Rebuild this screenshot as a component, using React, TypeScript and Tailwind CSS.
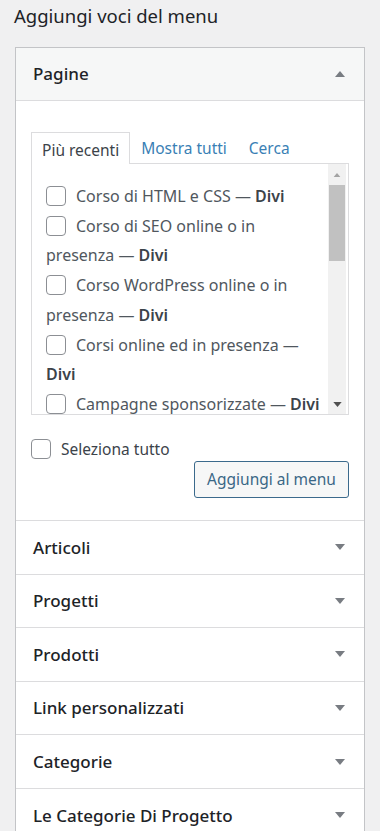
import React from 'react';

const sections = [
  'Articoli',
  'Progetti',
  'Prodotti',
  'Link personalizzati',
  'Categorie',
  'Le Categorie Di Progetto',
];

const pages: string[][] = [
  ['Corso di HTML e CSS'],
  ['Corso di SEO online o in', 'presenza'],
  ['Corso WordPress online o in', 'presenza'],
  ['Corsi online ed in presenza', ''],
  ['Campagne sponsorizzate'],
];

const Caret: React.FC<{ up?: boolean; className?: string }> = ({ up, className }) => (
  <svg width="10" height="6" viewBox="0 0 10 6" className={className}>
    {up ? <path d="M0 6 L5 0 L10 6 Z" fill="currentColor" /> : <path d="M0 0 L10 0 L5 6 Z" fill="currentColor" />}
  </svg>
);

const Checkbox: React.FC<{ className?: string }> = ({ className = '' }) => (
  <input
    type="checkbox"
    className={`inline-block h-[20px] w-[20px] appearance-none rounded-[4px] border border-[#8c8f94] bg-white align-middle ${className}`}
  />
);

const PageItem: React.FC<{ lines: string[] }> = ({ lines }) => {
  // last line always ends with the bold "Divi" suffix
  if (lines.length === 1) {
    return (
      <li className="whitespace-nowrap">
        <Checkbox className="mr-[10px] -mt-[3px]" />
        {lines[0]} — <b className="font-semibold text-[#3c434a]">Divi</b>
      </li>
    );
  }
  const [first, second] = lines;
  return (
    <li className="whitespace-nowrap">
      <Checkbox className="mr-[10px] -mt-[3px]" />
      {first}
      {second === '' ? ' —' : ''}
      <br />
      {second !== '' ? `${second} — ` : ''}
      <b className="font-semibold text-[#3c434a]">Divi</b>
    </li>
  );
};

export default function App() {
  return (
    <div className="min-h-[831px] overflow-hidden bg-[#f0f0f1] font-['Noto_Sans',sans-serif] text-[#1d2327]">
      <h2 className="mb-[17px] px-[14px] pt-px text-[18.5px] font-normal leading-[29px]">Aggiungi voci del menu</h2>

      <div className="ml-[15px] w-[350px] border border-[#c3c4c7] bg-white">
        {/* open section */}
        <div className="flex h-[53px] items-center justify-between border-b border-[#dcdcde] bg-[#f6f7f7] pl-[17px] pr-[19px]">
          <span className="text-[17px] font-medium">Pagine</span>
          <Caret up className="text-[#787c82]" />
        </div>

        <div className="px-[15px] pb-[22px] pt-[30px]">
          <ul className="flex items-end text-[15.5px]">
            <li className="relative z-10 -mb-px h-[32px] border border-b-0 border-[#dcdcde] bg-white px-[10px] pt-[3px] leading-[28px] text-[#3c434a]">
              Più recenti
            </li>
            <li className="h-[32px] px-[11px] pt-[3px] leading-[28px] text-[#3a7fb5]">Mostra tutti</li>
            <li className="h-[32px] px-[11px] pt-[3px] leading-[28px] text-[#3a7fb5]">Cerca</li>
          </ul>

          <div className="flex h-[252px] border border-[#dcdcde] bg-white">
            <ul className="flex-1 overflow-hidden pl-[14px] pt-[18px] text-[16px] leading-[29.7px] text-[#50575e]">
              {pages.map((p, i) => (
                <PageItem key={i} lines={p} />
              ))}
            </ul>
            <div className="mr-[2px] flex w-[18px] flex-col bg-[#f1f1f1]">
              <div className="flex h-[21px] items-center justify-center">
                <Caret up className="h-[4px] w-[8px] text-[#a3a3a3]" />
              </div>
              <div className="mx-px h-[76px] bg-[#c1c1c1]" />
              <div className="flex-1" />
              <div className="flex h-[20px] items-center justify-center">
                <Caret className="h-[5px] w-[9px] text-[#505050]" />
              </div>
            </div>
          </div>

          <label className="mt-[24px] flex items-center text-[15.5px] leading-[20px] text-[#3c434a]">
            <Checkbox className="mr-[10px]" />
            Seleziona tutto
          </label>

          <div className="mt-[2px] flex justify-end">
            <button className="h-[37px] w-[155px] rounded-[3px] border border-[#3b6a8c] bg-[#f6f7f7] text-[15.5px] text-[#3a6786]">
              Aggiungi al menu
            </button>
          </div>
        </div>

        {sections.map((s) => (
          <div
            key={s}
            className="flex h-[53.6px] items-center justify-between border-t border-[#dcdcde] bg-white pl-[17px] pr-[19px]"
          >
            <span className="text-[17px] font-medium">{s}</span>
            <Caret className="text-[#787c82]" />
          </div>
        ))}
      </div>
    </div>
  );
}
